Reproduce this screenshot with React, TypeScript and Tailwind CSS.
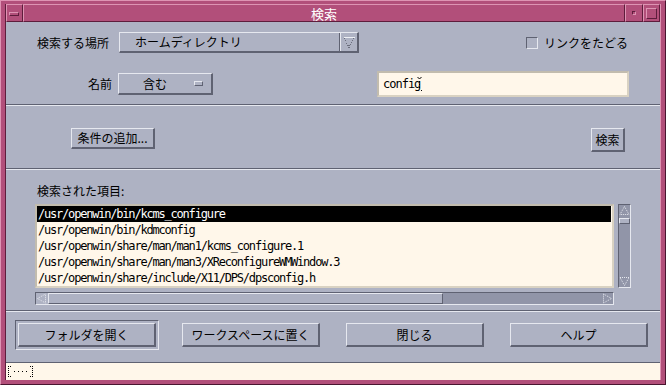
import React from "react";

const raised =
  "border-t border-l border-r-2 border-b-2 border-t-[#e6e8ef] border-l-[#e6e8ef] border-r-[#5f6272] border-b-[#5f6272]";
const raised1 =
  "border border-t-[#e6e8ef] border-l-[#e6e8ef] border-r-[#5f6272] border-b-[#5f6272]";
const sunken1 =
  "border border-t-[#5f6272] border-l-[#5f6272] border-r-[#e6e8ef] border-b-[#e6e8ef]";
const pinkRaised =
  "border border-t-[#de94b3] border-l-[#de94b3] border-r-[#5e1d3c] border-b-[#5e1d3c]";
const jp = "font-['Noto_Sans_CJK_JP',sans-serif]";
const mono = "font-['DejaVu_Sans_Mono',monospace]";

function Tri({ dir }: { dir: "up" | "down" | "left" | "right" }) {
  const pts = {
    up: "5.5,1.5 10,9.5 1,9.5",
    down: "1,1.5 10,1.5 5.5,9.5",
    left: "1.5,5.5 9.5,1 9.5,10",
    right: "1.5,1 9.5,5.5 1.5,10",
  }[dir];
  return (
    <svg width="11" height="11" viewBox="0 0 11 11" className="block">
      <polygon
        points={pts}
        fill="none"
        stroke="#e6e8ef"
        strokeWidth="1"
        strokeDasharray="1 1"
      />
    </svg>
  );
}

function OptTri() {
  return (
    <svg width="12" height="12" viewBox="0 0 12 12" className="block" shapeRendering="crispEdges">
      <line x1="0.5" y1="1.5" x2="11.5" y2="1.5" stroke="#eef0f5" strokeWidth="1" />
      <path
        d="M1 2 L6 11.5 L11 2"
        fill="none"
        stroke="#6a6d7c"
        strokeWidth="1"
        strokeDasharray="1 1"
      />
    </svg>
  );
}

function Sep() {
  return (
    <div className="h-[2px] w-full border-t border-b border-t-[#5f6272] border-b-[#e6e8ef] shrink-0" />
  );
}

function PushButton({ label, w }: { label: string; w: string }) {
  return (
    <div
      className={`${raised} ${w} h-[24px] flex items-center justify-center bg-[#aeb2c3] text-[12px] text-black ${jp}`}
    >
      {label}
    </div>
  );
}

const files = [
  "/usr/openwin/bin/kcms_configure",
  "/usr/openwin/bin/kdmconfig",
  "/usr/openwin/share/man/man1/kcms_configure.1",
  "/usr/openwin/share/man/man3/XReconfigureWMWindow.3",
  "/usr/openwin/share/include/X11/DPS/dpsconfig.h",
];

export default function App() {
  return (
    <div className="w-[666px] h-[385px] bg-[#b24f7a] border border-t-[#de94b3] border-l-[#de94b3] border-r-[#4a1530] border-b-[#4a1530] pt-[3px] pl-[4px] pr-[4px] pb-[4px] overflow-hidden">
      <div className="h-full flex flex-col border-l border-r border-l-[#5e1d3c] border-r-[#de94b3]">
        {/* Title bar */}
        <div className="h-[18px] flex shrink-0">
          <div className={`${pinkRaised} w-[17px] h-full flex items-start`}>
            <div className={`ml-[2px] mt-[7px] w-[10px] h-[4px] ${pinkRaised}`} />
          </div>
          <div
            className={`${pinkRaised} flex-1 h-full flex items-center justify-center text-white text-[13px] leading-none ${jp}`}
          >
            検索
          </div>
          <div className={`${pinkRaised} w-[18px] h-full flex items-center justify-center`}>
            <div className="w-[4px] h-[4px] border border-t-[#5e1d3c] border-l-[#5e1d3c] border-r-[#de94b3] border-b-[#de94b3]" />
          </div>
          <div className={`${pinkRaised} w-[17px] h-full flex items-center justify-center`}>
            <div className="w-[11px] h-[11px] border border-t-[#de94b3] border-l-[#de94b3] border-r-[#5e1d3c] border-b-[#5e1d3c]" />
          </div>
        </div>

        {/* Content */}
        <div className={`h-[341px] shrink-0 bg-[#aeb2c3] flex flex-col border-b border-b-[#5f6272] text-black text-[12px] ${jp}`}>
          {/* Row 1 */}
          <div className="mt-[10px] h-[21px] flex items-center shrink-0">
            <div className="ml-[31px] w-[82px] leading-none">検索する場所</div>
            <div className={`${raised} w-[240px] h-[21px] flex bg-[#aeb2c3]`}>
              <div className="flex-1 flex items-center pl-[15px] leading-none border-r border-r-[#5f6272]">
                ホームディレクトリ
              </div>
              <div className="w-[17px] h-full border-l border-l-[#e6e8ef] flex items-center justify-center">
                <OptTri />
              </div>
            </div>
            <div className={`ml-[167px] w-[12px] h-[12px] ${sunken1}`} />
            <div className="ml-[6px] leading-none">リンクをたどる</div>
          </div>

          {/* Row 2 */}
          <div className="mt-[18px] h-[26px] flex items-center shrink-0">
            <div className="ml-[31px] w-[75px] text-right leading-none">名前</div>
            <div className={`${raised} ml-[6px] w-[95px] h-[22px] flex items-center bg-[#aeb2c3]`}>
              <div className="flex-1 pl-[24px] leading-none">含む</div>
              <div className={`${raised1} w-[9px] h-[5px] mr-[8px]`} />
            </div>
            <div className="ml-[164px] w-[252px] h-[26px] bg-[#fff7ea] border-2 border-t-[#c2bcae] border-l-[#c2bcae] border-r-[#d9d2c2] border-b-[#d9d2c2] flex items-center pl-[4px]">
              <span className={`${mono} text-[12px] tracking-[-1px] leading-none`}>config</span>
              <svg width="5" height="16" viewBox="0 0 5 16" className="-ml-[3px]">
                <path d="M0.5 1 L2.5 3 L4.5 1" fill="none" stroke="#000" strokeWidth="1" />
                <rect x="2" y="5" width="1" height="1" fill="#000" />
                <rect x="2" y="8" width="1" height="1" fill="#000" />
                <rect x="2" y="11" width="1" height="1" fill="#000" />
                <rect x="0" y="14" width="1" height="1" fill="#000" />
                <rect x="4" y="14" width="1" height="1" fill="#000" />
              </svg>
            </div>
          </div>

          <div className="mt-[7px]">
            <Sep />
          </div>

          {/* Row 3 */}
          <div className="mt-[22px] h-[24px] flex items-start shrink-0">
            <div
              className={`ml-[65px] w-[84px] h-[21px] ${raised} flex items-center justify-center leading-none`}
            >
              条件の追加...
            </div>
            <div
              className={`ml-[436px] w-[34px] h-[24px] ${raised} flex items-center justify-center leading-none`}
            >
              検索
            </div>
          </div>

          <div className="mt-[16px]">
            <Sep />
          </div>

          {/* List label */}
          <div className="mt-[14px] h-[14px] pl-[31px] flex items-center leading-none shrink-0">
            検索された項目:
          </div>

          {/* List */}
          <div className="mt-[6px] h-[84px] flex shrink-0">
            <div className="ml-[29px] w-[579px] h-[84px] bg-[#fff7ea] border-2 border-t-[#c2bcae] border-l-[#c2bcae] border-r-[#d9d2c2] border-b-[#d9d2c2] overflow-hidden">
              {files.map((f, i) => (
                <div
                  key={f}
                  className={`h-[16px] mr-[1px] flex items-center pl-[1px] ${mono} text-[12px] tracking-[-1.2px] leading-none whitespace-nowrap ${
                    i === 0 ? "bg-black text-white" : "text-black"
                  }`}
                >
                  {f}
                </div>
              ))}
            </div>
            <div className={`ml-[4px] w-[13px] h-[84px] bg-[#9195a8] ${sunken1} flex flex-col`}>
              <div className="h-[11px] w-[11px]">
                <Tri dir="up" />
              </div>
              <div className={`mt-[2px] w-[11px] h-[6px] bg-[#aeb2c3] ${raised1}`} />
              <div className="flex-1" />
              <div className="h-[11px] w-[11px]">
                <Tri dir="down" />
              </div>
            </div>
          </div>

          {/* Horizontal scrollbar */}
          <div className={`mt-[4px] ml-[29px] w-[579px] h-[13px] bg-[#9195a8] ${sunken1} flex shrink-0`}>
            <div className="w-[12px] h-[11px] bg-[#aeb2c3]">
              <Tri dir="left" />
            </div>
            <div className={`w-[395px] h-[11px] bg-[#aeb2c3] ${raised1}`} />
            <div className="flex-1" />
            <div className="w-[11px] h-[11px]">
              <Tri dir="right" />
            </div>
          </div>

          <div className="mt-[5px]">
            <Sep />
          </div>

          {/* Bottom buttons */}
          <div className="mt-[8px] h-[30px] flex items-center shrink-0">
            <div className={`ml-[9px] w-[144px] h-[30px] ${sunken1} p-[2px]`}>
              <PushButton label="フォルダを開く" w="w-[138px]" />
            </div>
            <div className="ml-[23px]">
              <PushButton label="ワークスペースに置く" w="w-[138px]" />
            </div>
            <div className="ml-[26px]">
              <PushButton label="閉じる" w="w-[138px]" />
            </div>
            <div className="ml-[26px]">
              <PushButton label="ヘルプ" w="w-[138px]" />
            </div>
          </div>
        </div>

        {/* Status bar */}
        <div className="h-[17px] shrink-0 bg-[#fff7ea] flex items-center pl-[1px]">
          <svg width="27" height="13" viewBox="0 0 27 13" className="block">
            <g fill="#000">
              <rect x="1" y="1" width="1" height="1" />
              <rect x="1" y="3" width="1" height="1" />
              <rect x="1" y="5" width="1" height="1" />
              <rect x="1" y="7" width="1" height="1" />
              <rect x="1" y="9" width="1" height="1" />
              <rect x="1" y="11" width="1" height="1" />
              <rect x="3" y="1" width="1" height="1" />
              <rect x="3" y="11" width="1" height="1" />
              <rect x="7" y="6" width="1" height="1" />
              <rect x="11" y="6" width="1" height="1" />
              <rect x="15" y="6" width="1" height="1" />
              <rect x="19" y="6" width="1" height="1" />
              <rect x="23" y="1" width="1" height="1" />
              <rect x="23" y="11" width="1" height="1" />
              <rect x="25" y="1" width="1" height="1" />
              <rect x="25" y="3" width="1" height="1" />
              <rect x="25" y="5" width="1" height="1" />
              <rect x="25" y="7" width="1" height="1" />
              <rect x="25" y="9" width="1" height="1" />
              <rect x="25" y="11" width="1" height="1" />
            </g>
          </svg>
        </div>
      </div>
    </div>
  );
}
